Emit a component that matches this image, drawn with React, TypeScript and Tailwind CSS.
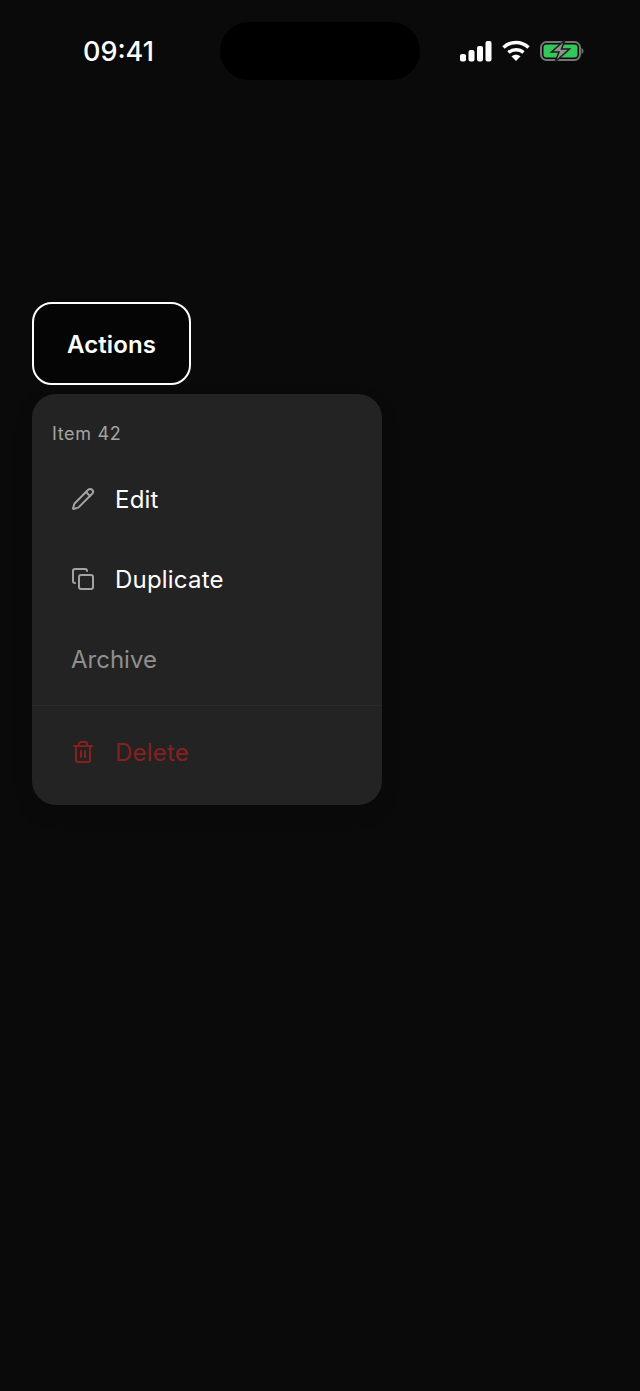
import { Copy, Pencil, Trash2 } from "lucide-react";

function StatusIcons() {
  return (
    <div className="flex items-center gap-[10px]">
      <svg width="32" height="22" viewBox="0 0 32 22" fill="#fff" className="-ml-[1px]">
        <rect x="0" y="14" width="6" height="7.500" rx="2" />
        <rect x="8.500" y="10" width="6" height="11.500" rx="2" />
        <rect x="17" y="6" width="6" height="15.500" rx="2" />
        <rect x="25.500" y="1" width="6" height="20.500" rx="2" />
      </svg>
      <svg width="28" height="22" viewBox="0 0 28 22" fill="none" stroke="#fff" strokeWidth="3.500">
        <path d="M1.500 7.500C8.500 .8 19.500 .8 26.500 7.500" />
        <path d="M6.500 12.500c4.200-3.800 10.800-3.800 15 0" />
        <path d="M14 21l-4.600-4.800c2.600-2.100 6.600-2.100 9.200 0z" fill="#fff" stroke="none" />
      </svg>
      <svg width="44" height="22" viewBox="0 0 44 22">
        <rect x="1" y="2" width="39" height="18" rx="5.500" fill="none" stroke="#757575" strokeWidth="2" />
        <rect x="3.500" y="4.500" width="34" height="13" rx="3" fill="#34c759" />
        <path d="M41.500 8v6c1.300-.5 2-1.600 2-3s-.7-2.500-2-3z" fill="#6e6e6e" />
        <path d="M25 0 11.500 12h7.500l-4 10 14.500-13h-8z" fill="#8f8f8f" stroke="#1c1c1c" strokeWidth="1.500" />
      </svg>
    </div>
  );
}

function MenuItem({ icon, label, color = "text-white tracking-[0.2px]" }: { icon?: React.ReactNode; label: string; color?: string }) {
  return (
    <div className={`mx-[8px] flex h-[80px] items-center gap-[20px] px-[31px] text-[24px] ${color}`}>
      {icon}
      <span className="pt-[1px]">{label}</span>
    </div>
  );
}

export default function App() {
  return (
    <div className="min-h-[1391px] bg-[#0a0a0a] font-['Inter',sans-serif]">
      <div className="grid h-[302px] grid-cols-[1fr_200px_1fr] items-start pt-[22px]">
        <div className="pl-[83px] pt-[12px] text-[27px] leading-[36px] font-medium text-white">09:41</div>
        <div className="h-[58px] rounded-full bg-black" />
        <div className="flex justify-end pr-[56px] pt-[18px]">
          <StatusIcons />
        </div>
      </div>

      <div className="px-[32px]">
        <button className="flex h-[83px] w-[159px] items-center justify-center rounded-[20px] border-[2.5px] border-white bg-[#050505] pt-[2px] text-[24px] font-semibold tracking-[0.1px] text-white">
          Actions
        </button>

        <div className="mt-[9px] flex h-[411px] w-[350px] flex-col rounded-[24px] bg-[#232323] pt-[26px] shadow-[0_8px_20px_rgba(0,0,0,0.12)]">
          <div className="h-[39px] pl-[20px] text-[18px] leading-[28px] tracking-[0.65px] text-[#a3a3a3]">Item 42</div>
          <MenuItem icon={<Pencil size={24} strokeWidth={2} className="text-[#a3a3a3]" />} label="Edit" />
          <MenuItem icon={<Copy size={24} strokeWidth={2} className="text-[#a3a3a3]" />} label="Duplicate" />
          <MenuItem label="Archive" color="text-[#8f8f8f]" />
          <div className="my-[6px] h-[1px] bg-[#2b2b2b]" />
          <MenuItem icon={<Trash2 size={24} strokeWidth={2} />} label="Delete" color="text-[#862020] tracking-[0.2px]" />
        </div>
      </div>
    </div>
  );
}
